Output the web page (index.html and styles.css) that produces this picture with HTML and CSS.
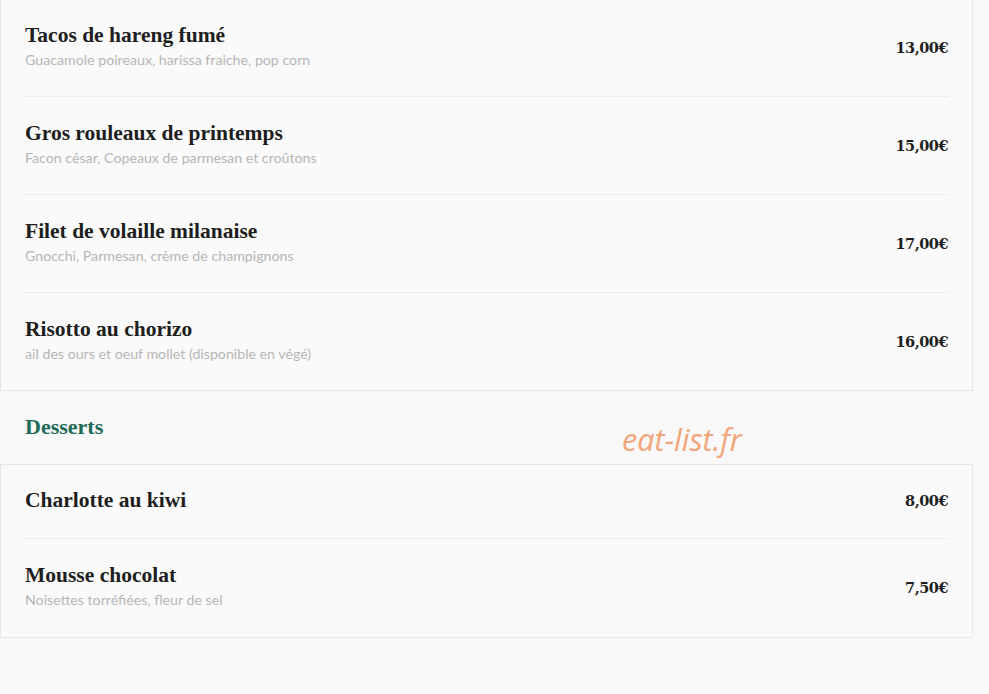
FILE: index.html
```html
<!DOCTYPE html>
<html lang="fr">
<head>
<meta charset="utf-8">
<title>Menu</title>
<link rel="stylesheet" href="styles.css">
</head>
<body>
<div class="page">
  <section class="card card-top">
    <div class="item">
      <div class="info">
        <div class="name">Tacos de hareng fumé</div>
        <div class="desc">Guacamole poireaux, harissa fraiche, pop corn</div>
      </div>
      <div class="price">13,00€</div>
    </div>
    <div class="item">
      <div class="info">
        <div class="name">Gros rouleaux de printemps</div>
        <div class="desc">Facon césar, Copeaux de parmesan et croûtons</div>
      </div>
      <div class="price">15,00€</div>
    </div>
    <div class="item">
      <div class="info">
        <div class="name">Filet de volaille milanaise</div>
        <div class="desc">Gnocchi, Parmesan, crème de champignons</div>
      </div>
      <div class="price">17,00€</div>
    </div>
    <div class="item">
      <div class="info">
        <div class="name">Risotto au chorizo</div>
        <div class="desc">ail des ours et oeuf mollet (disponible en végé)</div>
      </div>
      <div class="price">16,00€</div>
    </div>
  </section>

  <h2 class="section-title">Desserts</h2>

  <section class="card card-last">
    <div class="item">
      <div class="info">
        <div class="name">Charlotte au kiwi</div>
      </div>
      <div class="price">8,00€</div>
    </div>
    <div class="item">
      <div class="info">
        <div class="name">Mousse chocolat</div>
        <div class="desc">Noisettes torréfiées, fleur de sel</div>
      </div>
      <div class="price">7,50€</div>
    </div>
  </section>

  <div class="watermark">eat-list.fr</div>
</div>
</body>
</html>
```

FILE: styles.css
```css
html, body {
  margin: 0;
  padding: 0;
  background: #f8f8f8;
}
.page {
  position: relative;
  width: 973px;
  height: 694px;
  overflow: hidden;
}
.card {
  background: #fafafa;
  border: 1px solid #e6e6e6;
  padding: 0 24px;
}
.card-top {
  margin-top: -1px;
}
.item {
  display: flex;
  align-items: center;
  justify-content: space-between;
  padding: 24px 0 26px;
  border-top: 1px dotted #dcdcdc;
}
.item:first-child {
  border-top: none;
  padding-top: 23px;
}
.card-last .item:last-child {
  padding-bottom: 27px;
}
.name {
  font-family: "Liberation Serif", serif;
  font-weight: bold;
  font-size: 21.5px;
  line-height: 24px;
  color: #1e1e1e;
}
.desc {
  margin-top: 3px;
  font-family: "Lato", sans-serif;
  font-size: 14.2px;
  line-height: 20px;
  color: #b6b6b6;
}
.price {
  padding-top: 1px;
  font-family: "DejaVu Serif", serif;
  font-weight: bold;
  font-size: 14.5px;
  letter-spacing: -0.5px;
  color: #1e1e1e;
}
.section-title {
  margin: 0;
  padding: 24px 25px 25px;
  font-family: "Liberation Serif", serif;
  font-weight: bold;
  font-size: 22px;
  line-height: 24px;
  color: #1d6b57;
}
.watermark {
  position: absolute;
  left: 622px;
  top: 419px;
  font-family: "Open Sans", sans-serif;
  font-style: italic;
  font-size: 30.5px;
  line-height: 40px;
  color: #f2a57a;
}
```
